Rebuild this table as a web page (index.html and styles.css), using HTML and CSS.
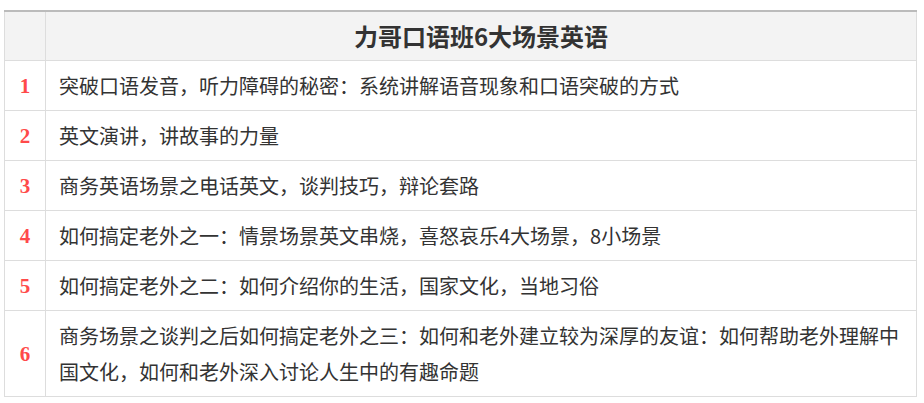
FILE: index.html
```html
<!DOCTYPE html>
<html lang="zh">
<head>
<meta charset="utf-8">
<link rel="stylesheet" href="styles.css">
</head>
<body>
<div class="wrap">
<table class="course">
  <thead>
    <tr><th class="num"></th><th class="title">力哥口语班6大场景英语</th></tr>
  </thead>
  <tbody>
    <tr><td class="num">1</td><td class="text">突破口语发音，听力障碍的秘密：系统讲解语音现象和口语突破的方式</td></tr>
    <tr><td class="num">2</td><td class="text">英文演讲，讲故事的力量</td></tr>
    <tr><td class="num">3</td><td class="text">商务英语场景之电话英文，谈判技巧，辩论套路</td></tr>
    <tr><td class="num">4</td><td class="text">如何搞定老外之一：情景场景英文串烧，喜怒哀乐4大场景，8小场景</td></tr>
    <tr><td class="num">5</td><td class="text">如何搞定老外之二：如何介绍你的生活，国家文化，当地习俗</td></tr>
    <tr><td class="num">6</td><td class="text">商务场景之谈判之后如何搞定老外之三：如何和老外建立较为深厚的友谊：如何帮助老外理解中国文化，如何和老外深入讨论人生中的有趣命题</td></tr>
  </tbody>
</table>
</div>
</body>
</html>
```

FILE: styles.css
```css
html, body {
  margin: 0;
  padding: 0;
  background: #fff;
}
.wrap {
  padding: 10px 7px 0 4px;
}
.course {
  width: 913px;
  border-collapse: collapse;
  border-top: 2px solid #bbbbbb;
  font-family: "Noto Sans CJK SC", "Noto Sans", sans-serif;
  color: #333;
}
.course th,
.course td {
  border: 1px solid #dddddd;
}
.course thead th {
  border-top: 2px solid #bbbbbb;
  background: #f3f3f3;
  height: 48px;
  padding: 0;
}
.course th.num {
  width: 40px;
}
.course th.title {
  font-size: 24px;
  font-weight: bold;
  text-align: center;
  color: #333;
  line-height: 30px;
}
.course td {
  padding: 7px 12px 6px 13px;
  font-size: 20px;
  line-height: 36px;
  vertical-align: middle;
}
.course td.num {
  padding: 0;
  text-align: center;
  font-family: "Liberation Serif", serif;
  font-weight: bold;
  font-size: 21px;
  color: #ff4a4a;
}
.course td.text {
  text-align: left;
}
```
